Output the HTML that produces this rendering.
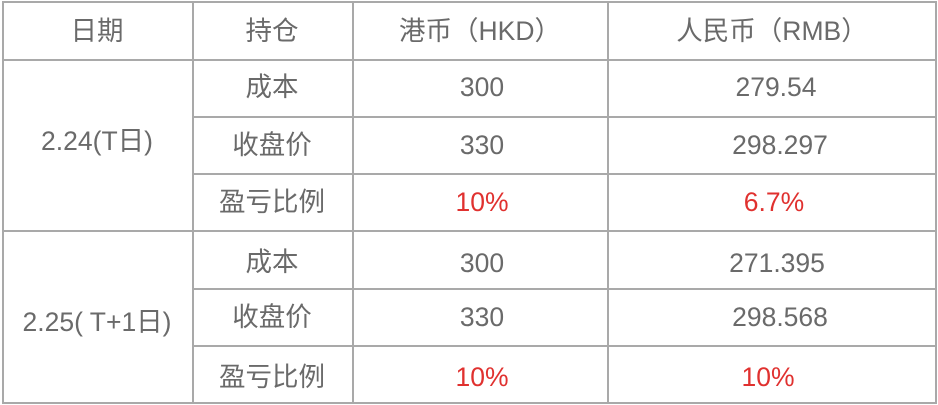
<!DOCTYPE html><html><head><meta charset="utf-8"><style>
body{margin:0;width:938px;height:405px;background:#fff;position:relative;overflow:hidden;font-family:"Liberation Sans","Noto Sans CJK SC",sans-serif;color:#6a6a6a;font-size:26.5px}
.h{position:absolute;height:2px;background:#a9a9a9}
.v{position:absolute;width:2px;background:#a9a9a9}
.t{position:absolute;transform:translate(-50%,-50%);white-space:nowrap;line-height:1}
.r{color:#e0312f}
</style></head><body>
<div class="h" style="left:2px;width:935px;top:1px"></div>
<div class="h" style="left:2px;width:935px;top:59px"></div>
<div class="h" style="left:193px;width:744px;top:116px"></div>
<div class="h" style="left:193px;width:744px;top:173px"></div>
<div class="h" style="left:2px;width:935px;top:230px"></div>
<div class="h" style="left:193px;width:744px;top:288px"></div>
<div class="h" style="left:193px;width:744px;top:345px"></div>
<div class="h" style="left:2px;width:935px;top:402px"></div>
<div class="v" style="left:2px;top:1px;height:403px"></div>
<div class="v" style="left:192px;top:1px;height:403px"></div>
<div class="v" style="left:352px;top:1px;height:403px"></div>
<div class="v" style="left:607px;top:1px;height:403px"></div>
<div class="v" style="left:935px;top:1px;height:403px"></div>

<div class="t" style="left:97px;top:31px">日期</div>
<div class="t" style="left:272px;top:31px">持仓</div>
<div class="t" style="left:480px;top:31px">港币（HKD）</div>
<div class="t" style="left:772px;top:31px">人民币（RMB）</div>

<div class="t" style="left:97px;top:141px">2.24(T日)</div>
<div class="t" style="left:272px;top:87px">成本</div>
<div class="t" style="left:482px;top:87px">300</div>
<div class="t" style="left:776px;top:87px">279.54</div>
<div class="t" style="left:272px;top:145px">收盘价</div>
<div class="t" style="left:482px;top:145px">330</div>
<div class="t" style="left:780px;top:145px">298.297</div>
<div class="t" style="left:272px;top:202px">盈亏比例</div>
<div class="t r" style="left:482px;top:202px">10%</div>
<div class="t r" style="left:774px;top:202px">6.7%</div>

<div class="t" style="left:97px;top:322px">2.25( T+1日)</div>
<div class="t" style="left:272px;top:262px">成本</div>
<div class="t" style="left:482px;top:263px">300</div>
<div class="t" style="left:777px;top:263px">271.395</div>
<div class="t" style="left:272px;top:317px">收盘价</div>
<div class="t" style="left:482px;top:317px">330</div>
<div class="t" style="left:780px;top:317px">298.568</div>
<div class="t" style="left:272px;top:377px">盈亏比例</div>
<div class="t r" style="left:482px;top:377px">10%</div>
<div class="t r" style="left:768px;top:377px">10%</div>
</body></html>
